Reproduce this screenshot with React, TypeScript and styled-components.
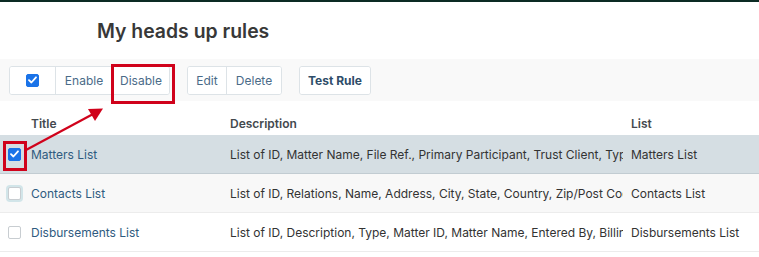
import React from 'react';
import styled, { createGlobalStyle } from 'styled-components';

const GlobalStyle = createGlobalStyle`
  html, body {
    margin: 0;
    padding: 0;
    background: #ffffff;
  }
  body {
    font-family: Inter, "Noto Sans", "Liberation Sans", sans-serif;
    color: #333333;
  }
`;

const Page = styled.div`
  position: relative;
  width: 759px;
  height: 257px;
  overflow: hidden;
  border-top: 2px solid #0c2b24;
  box-sizing: border-box;
`;

const Heading = styled.h1`
  margin: 0;
  padding: 17px 0 0 97px;
  height: 57px;
  box-sizing: border-box;
  font-size: 19.4px;
  font-weight: 600;
  color: #383838;
`;

const Toolbar = styled.div`
  display: flex;
  align-items: center;
  gap: 17px;
  height: 42px;
  padding: 0 9px;
  background: #f9f9f9;
`;

const Group = styled.div`
  display: flex;
  height: 29px;
  box-sizing: border-box;
  border: 1px solid #dde3e7;
  border-radius: 3px;
  background: #ffffff;
  overflow: hidden;
`;

const Btn = styled.button<{ $w: number; $bold?: boolean }>`
  width: ${(p) => p.$w}px;
  height: 100%;
  padding: 0;
  border: none;
  background: #ffffff;
  font-family: inherit;
  font-size: 12px;
  font-weight: ${(p) => (p.$bold ? 700 : 400)};
  color: ${(p) => (p.$bold ? '#2e4d69' : '#4a6b88')};
  display: flex;
  align-items: center;
  justify-content: center;
  & + & {
    border-left: 1px solid #dde3e7;
  }
`;

const Box = styled.span<{ $checked?: boolean; $focus?: boolean }>`
  display: inline-flex;
  align-items: center;
  justify-content: center;
  width: 13px;
  height: 13px;
  box-sizing: border-box;
  border-radius: 2px;
  border: 1px solid ${(p) => (p.$checked ? '#1a73e8' : '#c8cdd1')};
  background: ${(p) => (p.$checked ? '#1a73e8' : '#ffffff')};
  box-shadow: ${(p) => (p.$focus ? '0 0 0 2px #d2e5e9' : 'none')};
  vertical-align: middle;
`;

const Table = styled.table`
  width: 759px;
  border-collapse: collapse;
  table-layout: fixed;
  font-size: 12px;
`;

const HeadCell = styled.th`
  height: 34px;
  box-sizing: border-box;
  padding: 10px 8px 0;
  text-align: left;
  font-weight: 600;
  color: #44494e;
  vertical-align: middle;
`;

const Row = styled.tr<{ $tone: 'selected' | 'alt' | 'plain' }>`
  background: ${(p) =>
    p.$tone === 'selected' ? '#d5dee3' : p.$tone === 'alt' ? '#f8f8f8' : '#ffffff'};
  border-bottom: 1px solid ${(p) => (p.$tone === 'selected' ? '#c2ccd2' : '#ececec')};
`;

const Cell = styled.td<{ $link?: boolean }>`
  height: 38px;
  padding: 0 8px;
  white-space: nowrap;
  overflow: hidden;
  text-overflow: clip;
  color: ${(p) => (p.$link ? '#2f5b80' : '#333333')};
  vertical-align: middle;
`;

const CheckCell = styled.td`
  padding: 0 0 0 8px;
  vertical-align: middle;
  line-height: 0;
`;

const Highlight = styled.div<{ $x: number; $y: number; $w: number; $h: number }>`
  position: absolute;
  left: ${(p) => p.$x}px;
  top: ${(p) => p.$y}px;
  width: ${(p) => p.$w}px;
  height: ${(p) => p.$h}px;
  box-sizing: border-box;
  border: 3px solid #d0021b;
  pointer-events: none;
`;

const Overlay = styled.svg`
  position: absolute;
  left: 0;
  top: 0;
  pointer-events: none;
`;

const Check = () => (
  <svg width="9" height="8" viewBox="0 0 9 8">
    <path d="M1 4.2 L3.4 6.5 L8 1.3" fill="none" stroke="#fff" strokeWidth="1.8" strokeLinecap="round" strokeLinejoin="round" />
  </svg>
);

const rows = [
  {
    title: 'Matters List',
    desc: 'List of ID, Matter Name, File Ref., Primary Participant, Trust Client, Type, Status',
    list: 'Matters List',
    tone: 'selected' as const,
  },
  {
    title: 'Contacts List',
    desc: 'List of ID, Relations, Name, Address, City, State, Country, Zip/Post Code, Phone',
    list: 'Contacts List',
    tone: 'alt' as const,
  },
  {
    title: 'Disbursements List',
    desc: 'List of ID, Description, Type, Matter ID, Matter Name, Entered By, Billing Status',
    list: 'Disbursements List',
    tone: 'plain' as const,
  },
];

export default function App() {
  return (
    <Page>
      <GlobalStyle />
      <Heading>My heads up rules</Heading>
      <Toolbar>
        <Group>
          <Btn $w={45}>
            <Box $checked>
              <Check />
            </Box>
          </Btn>
          <Btn $w={57}>Enable</Btn>
          <Btn $w={57}>Disable</Btn>
        </Group>
        <Group>
          <Btn $w={38}>Edit</Btn>
          <Btn $w={55}>Delete</Btn>
        </Group>
        <Group>
          <Btn $w={70} $bold>Test Rule</Btn>
        </Group>
      </Toolbar>
      <Table>
        <colgroup>
          <col style={{ width: 23 }} />
          <col style={{ width: 199 }} />
          <col style={{ width: 401 }} />
          <col />
        </colgroup>
        <thead>
          <tr>
            <HeadCell />
            <HeadCell>Title</HeadCell>
            <HeadCell>Description</HeadCell>
            <HeadCell>List</HeadCell>
          </tr>
        </thead>
        <tbody>
          {rows.map((r, i) => (
            <Row key={r.title} $tone={r.tone}>
              <CheckCell>
                <Box $checked={i === 0} $focus={i === 1}>
                  {i === 0 ? <Check /> : null}
                </Box>
              </CheckCell>
              <Cell $link>{r.title}</Cell>
              <Cell>{r.desc}</Cell>
              <Cell>{r.list}</Cell>
            </Row>
          ))}
        </tbody>
      </Table>
      <Highlight $x={111} $y={62} $w={64} $h={40} />
      <Highlight $x={3} $y={139} $w={24} $h={30} />
      <Overlay width="759" height="257">
        <line x1="26" y1="148" x2="95" y2="111" stroke="#d0021b" strokeWidth="2.2" />
        <polygon points="103,106.5 88,107 95,119" fill="#d0021b" />
      </Overlay>
    </Page>
  );
}
